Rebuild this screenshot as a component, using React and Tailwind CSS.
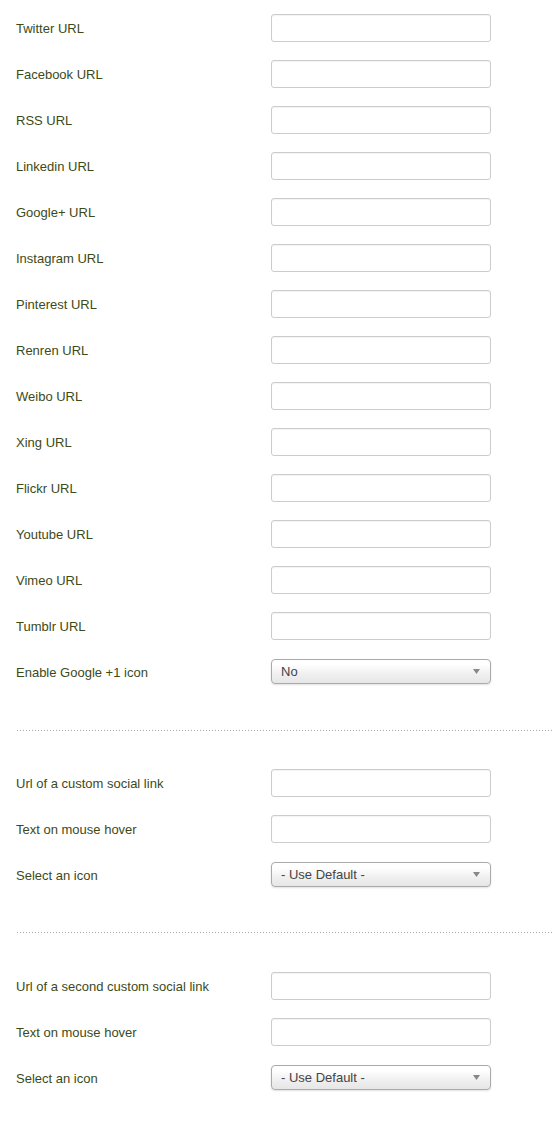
import React from "react";

const font = { fontFamily: '"Liberation Sans", Arial, sans-serif' };

function Label({ children }) {
  return (
    <div className="w-[271px] shrink-0 pl-4 pt-[1px] text-[13px] leading-[16px] text-[#3d4a18]">
      {children}
    </div>
  );
}

function InputRow({ label }) {
  return (
    <div className="flex h-[28px] items-center">
      <Label>{label}</Label>
      <div className="h-[28px] w-[220px] rounded-[3px] border border-[#cccccc] bg-white shadow-[inset_0_1px_1px_rgba(0,0,0,0.05)]" />
    </div>
  );
}

function SelectRow({ label, value }) {
  return (
    <div className="flex h-[28px] items-center">
      <Label>{label}</Label>
      <div className="mt-[-2px] flex h-[25px] w-[220px] items-center justify-between rounded-[4px] border border-[#aaaaaa] bg-[linear-gradient(to_bottom,#ffffff_20%,#f0f0f0_60%,#e6e6e6)] pl-[9px] pr-[10px] shadow-[0_1px_2px_rgba(0,0,0,0.12)]">
        <span className="pt-[1px] text-[13px] leading-[16px] text-[#444444]">{value}</span>
        <svg width="7" height="5" viewBox="0 0 7 5">
          <path d="M0 0 L7 0 L3.5 5 Z" fill="#888888" />
        </svg>
      </div>
    </div>
  );
}

function Divider() {
  return (
    <div className="ml-[17px] h-px bg-[linear-gradient(to_right,#a8a8a8_1px,transparent_1px)] bg-[length:3px_1px]" />
  );
}

export default function App() {
  const urls = [
    "Twitter URL",
    "Facebook URL",
    "RSS URL",
    "Linkedin URL",
    "Google+ URL",
    "Instagram URL",
    "Pinterest URL",
    "Renren URL",
    "Weibo URL",
    "Xing URL",
    "Flickr URL",
    "Youtube URL",
    "Vimeo URL",
    "Tumblr URL",
  ];
  return (
    <div className="h-[1130px] w-[554px] bg-white" style={font}>
      <div className="flex flex-col gap-[18px] pt-[14px]">
        {urls.map((u) => (
          <InputRow key={u} label={u} />
        ))}
        <SelectRow label="Enable Google +1 icon" value="No" />
      </div>
      <div className="mt-[44px]">
        <Divider />
      </div>
      <div className="mt-[38px] flex flex-col gap-[18px]">
        <InputRow label="Url of a custom social link" />
        <InputRow label="Text on mouse hover" />
        <SelectRow label="Select an icon" value="- Use Default -" />
      </div>
      <div className="mt-[43px]">
        <Divider />
      </div>
      <div className="mt-[39px] flex flex-col gap-[18px]">
        <InputRow label="Url of a second custom social link" />
        <InputRow label="Text on mouse hover" />
        <SelectRow label="Select an icon" value="- Use Default -" />
      </div>
    </div>
  );
}
